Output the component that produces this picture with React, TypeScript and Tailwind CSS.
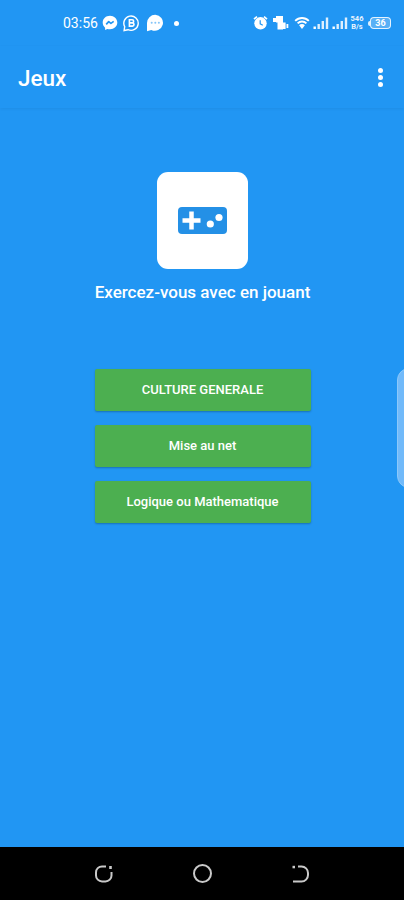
import { useState } from "react";

const GAMES = ["CULTURE GENERALE", "Mise au net", "Logique ou Mathematique"];

function Signal() {
  return (
    <svg width="16" height="14" viewBox="0 0 16 14" fill="currentColor">
      <rect x="0.5" y="10.5" width="2.4" height="2.5" />
      <rect x="4.5" y="8" width="2.4" height="5" opacity="0.85" />
      <rect x="8.6" y="5" width="2.4" height="8" opacity="0.85" />
      <rect x="12.8" y="1.5" width="2.4" height="11.5" opacity="0.85" />
    </svg>
  );
}

function StatusBar() {
  return (
    <div className="flex h-[46px] shrink-0 items-center pr-[13px] pl-[63px]">
      <span className="w-[39px] text-sm leading-none">03:56</span>
      {/* messenger */}
      <svg width="16" height="16" viewBox="0 0 16 16">
        <path d="M8 .8C3.9.8.7 3.7.7 7.6c0 2.1.9 3.9 2.4 5.1v2.3l2.2-1.1c.8.2 1.7.4 2.7.4 4.1 0 7.3-2.9 7.3-6.7S12.1.8 8 .8z" fill="white" />
        <path d="M4.2 9.3 6.7 6.6l2.2 1.8 2.8-2" fill="none" stroke="#2196f3" strokeWidth="1.7" strokeLinejoin="round" />
      </svg>
      {/* whatsapp business */}
      <svg className="ml-[5px]" width="17" height="18" viewBox="0 0 17 18" fill="none" stroke="white">
        <path d="M1.1 16.5 1.7 12.6A7.2 7.2 0 1 1 5 15.7z" strokeWidth="1.4" />
        <path d="M6.4 5.8h2.7a1.5 1.5 0 0 1 0 3.1H6.4zM6.4 8.9h3a1.6 1.6 0 0 1 0 3.2h-3z" strokeWidth="1.6" />
      </svg>
      {/* messages */}
      <svg className="ml-[6px]" width="18" height="18" viewBox="0 0 18 18">
        <path d="M9.3.8a8 8 0 1 1-4 15.1L1 17.2V9A8.2 8.2 0 0 1 9.3.8z" fill="white" />
        <g fill="#2196f3" opacity="0.55">
          <circle cx="5.7" cy="8.7" r="1" />
          <circle cx="9.3" cy="8.7" r="1" />
          <circle cx="12.9" cy="8.7" r="1" />
        </g>
      </svg>
      <span className="ml-[10px] size-[5px] rounded-full bg-white" />

      <div className="ml-auto flex items-center">
        {/* alarm */}
        <svg width="15" height="16" viewBox="0 0 15 16">
          <circle cx="7.5" cy="8.3" r="6.2" fill="white" />
          <path d="M1 4.2 4 1.6M14 4.2 11 1.6" stroke="white" strokeWidth="1.7" />
          <path d="M7.2 5.2v3.7l2.6 1.3" fill="none" stroke="#2196f3" strokeWidth="1.2" />
        </svg>
        {/* vibrate */}
        <svg className="ml-[4px]" width="18" height="16" viewBox="0 0 18 16" fill="white">
          <path d="M4 1h7v13.5H5.5V7.5H4z" />
          <rect x="1" y="3" width="3.5" height="4" />
          <rect x="11" y="7.5" width="2.6" height="6.5" />
          <rect x="14.5" y="9" width="1.8" height="4" />
        </svg>
        {/* wifi */}
        <svg className="ml-[4px]" width="16" height="14" viewBox="0 0 16 14" fill="none" stroke="white" strokeWidth="1.9">
          <path d="M1.2 4.8a9.6 9.6 0 0 1 13.6 0M3.6 7.4a6.2 6.2 0 0 1 8.8 0" />
          <path d="M5.1 9.3a4 4 0 0 1 5.8 0L8 13z" fill="white" stroke="none" />
        </svg>
        <span className="ml-[3px]">
          <Signal />
        </span>
        <span className="ml-[3px]">
          <Signal />
        </span>
        <div className="ml-[2px] flex w-[14px] flex-col items-center text-[7.5px] font-bold opacity-90">
          <span className="h-[8px] leading-[8px]">546</span>
          <span className="h-[8px] leading-[8px]">B/s</span>
        </div>
        <div className="ml-[4px] flex items-center">
          <span className="h-[5px] w-[2px] rounded-l-sm bg-white/85" />
          <span className="flex h-[12px] w-[21px] items-center justify-center rounded-[4px] border-[1.5px] border-white/85 bg-white/25 text-[9px] leading-none font-bold">
            36
          </span>
        </div>
      </div>
    </div>
  );
}

function NavBar() {
  return (
    <nav className="flex h-[53px] shrink-0 items-center justify-between bg-black pr-[93px] pl-[94px] text-[#c9c9c9]">
      <svg width="20" height="20" viewBox="0 0 20 20" fill="none" stroke="currentColor" strokeWidth="2">
        <path d="M12 2.4H8a6 6 0 0 0-6 6v3a6 6 0 0 0 6 6h3.5a6 6 0 0 0 6-6V8" />
        <rect x="15.2" y="2" width="2.6" height="3" fill="currentColor" stroke="none" />
      </svg>
      <svg width="20" height="20" viewBox="0 0 20 20" fill="none" stroke="currentColor" strokeWidth="2">
        <circle cx="9.5" cy="9.5" r="8.5" />
      </svg>
      <svg width="20" height="20" viewBox="0 0 20 20" fill="none" stroke="currentColor" strokeWidth="2">
        <path d="M7 2.5h3.500a6.500 6.500 0 0 1 6.500 6.500v2a6.500 6.500 0 0 1-6.500 6.500H2" />
        <rect x="1.500" y="1.800" width="2.500" height="2.500" fill="currentColor" stroke="none" />
      </svg>
    </nav>
  );
}

export default function App() {
  const [selected, setSelected] = useState<string | null>(null);

  return (
    <div className="relative flex h-[900px] w-[404px] flex-col overflow-hidden bg-[#2196f3] font-['Roboto',sans-serif] text-white">
      <StatusBar />

      <header className="flex h-[62px] shrink-0 items-center justify-between pr-[21px] pl-[18px] shadow-[0_1px_3px_rgba(0,0,0,0.06)]">
        <h1 className="pt-[3px] text-[22.5px] leading-none font-medium">Jeux</h1>
        <button aria-label="Menu" className="flex flex-col gap-[2px]">
          <span className="size-[5px] rounded-full bg-white" />
          <span className="size-[5px] rounded-full bg-white" />
          <span className="size-[5px] rounded-full bg-white" />
        </button>
      </header>

      <main className="flex flex-1 flex-col items-center pt-[64px]">
        <div className="flex h-[97px] w-[91px] items-center justify-center rounded-[11px] bg-white">
          <svg width="49" height="27" viewBox="0 0 49 27">
            <rect width="49" height="27" rx="4" fill="#2490e6" />
            <path d="M13.5 4.5v18M4.500 13.5h18" stroke="white" strokeWidth="4.5" />
            <circle cx="32.3" cy="17" r="3.6" fill="white" />
            <circle cx="41" cy="10.5" r="3.6" fill="white" />
          </svg>
        </div>
        <p className="mt-[13px] pl-px text-[17px] leading-[20px] font-medium whitespace-nowrap">Exercez-vous avec en jouant</p>

        <div className="mt-[67px] ml-px flex w-[216px] flex-col gap-[14px]">
          {GAMES.map((game) => (
            <button
              key={game}
              onClick={() => setSelected(game)}
              aria-pressed={selected === game}
              className="h-[42px] rounded-[2px] bg-[#4caf50] text-[13px] font-medium shadow-[0_1px_2px_rgba(0,0,0,0.25)]"
            >
              {game}
            </button>
          ))}
        </div>
      </main>

      {/* edge panel handle, cut off by the screen border */}
      <div className="absolute top-[368px] left-[397px] h-[120px] w-[24px] rounded-[14px] border border-[#8cc8fa] bg-[#71bafa]" />

      <NavBar />
    </div>
  );
}
